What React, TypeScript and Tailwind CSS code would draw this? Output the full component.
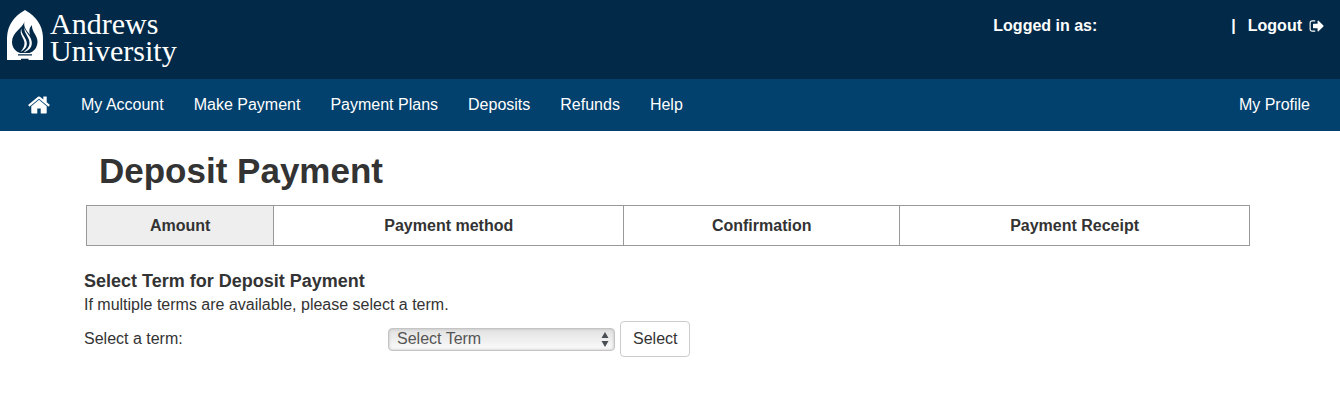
import React, { useState } from "react";

const navLinks = ["My Account", "Make Payment", "Payment Plans", "Deposits", "Refunds", "Help"];

const steps = [
    { label: "Amount", className: "grow-187 bg-[#eeeeee]" },
    { label: "Payment method", className: "grow-350 border-l" },
    { label: "Confirmation", className: "grow-276 border-l" },
    { label: "Payment Receipt", className: "grow-350 border-l" },
];

function LogoMark() {
    return (
        <svg className="h-[50px] w-9" viewBox="0 0 36 50" fill="none" aria-hidden="true">
            <path d="M18 0C10 4.500 0 13 0 29V50H36V29C36 13 26 4.500 18 0Z" fill="#fff" />
            <path
                d="M17.500 11.500C16 18 5 22 5 32C5 37.500 8.500 41.500 13 43H22.500C27 41.500 30.500 37.500 30.500 31.500C30.500 25 24.500 22 25 15C22 18 22 21 23 25C20 21 16 17 17.500 11.500Z"
                fill="#022a48"
            />
            <path
                d="M14.500 18.500C11.500 24 17.500 28 17.500 33C17.500 37 15.500 39 13.500 42C18 39.500 20 37 19.800 33C19.500 27.500 13.500 24 14.500 18.500Z"
                fill="#fff"
            />
            <path
                d="M17.500 17.500C16.500 23 22.500 27 22.500 33C22.500 37.500 19 40 16.500 42.500C22 40.500 25 37.500 24.800 32.500C24.500 26 18.500 23 17.500 17.500Z"
                fill="#fff"
            />
            <path d="M11 44.800H25M14 49.300H21.500" stroke="#022a48" strokeWidth="1.300" />
        </svg>
    );
}

function HomeIcon() {
    return (
        <svg className="size-6" viewBox="0 0 1792 1792" fill="currentColor" aria-hidden="true">
            <path d="M1472 992v480q0 26-19 45t-45 19h-384v-384h-256v384h-384q-26 0-45-19t-19-45v-480q0-1 .5-3t.5-3l575-474 575 474q1 2 1 6zm223-69l-62 74q-8 9-21 11h-3q-13 0-21-7l-692-577-692 577q-12 8-24 7-13-2-21-11l-62-74q-8-10-7-23.500t11-21.500l719-599q32-26 76-26t76 26l244 204v-195q0-14 9-23t23-9h192q14 0 23 9t9 23v408l219 182q10 8 11 21.500t-7 23.500z" />
        </svg>
    );
}

function LogoutIcon() {
    return (
        <svg className="size-4" viewBox="0 0 1792 1792" fill="currentColor" aria-hidden="true">
            <path d="M704 1440q0 4 1 20t.5 26.500-3 23.500-10 19.500-20.500 6.500h-320q-119 0-203.500-84.500t-84.500-203.500v-704q0-119 84.500-203.500t203.500-84.500h320q13 0 22.500 9.500t9.500 22.500q0 4 1 20t.5 26.500-3 23.500-10 19.500-20.500 6.500h-320q-66 0-113 47t-47 113v704q0 66 47 113t113 47h312l11.500 1 11.500 3 8 5.500 7 9 2 13.500zm928-544q0 26-19 45l-544 544q-19 19-45 19t-45-19-19-45v-288h-448q-26 0-45-19t-19-45v-384q0-26 19-45t45-19h448v-288q0-26 19-45t45-19 45 19l544 544q19 19 19 45z" />
        </svg>
    );
}

export default function App() {
    const [term, setTerm] = useState("");

    const handleSubmit = (e: React.FormEvent) => {
        e.preventDefault();
    };

    return (
        <div className="min-h-screen bg-white font-['Liberation_Sans',Arial,sans-serif] text-base text-[#333333]">
            {/* Header */}
            <header className="flex items-start justify-between bg-[#022a48] pr-[15px] pb-[15px] pl-[7px] text-white">
                <a href="#" className="flex gap-[7px] pt-[10px]">
                    <LogoMark />
                    <span className="font-['Liberation_Serif',serif] text-[30px] leading-[27px]">
                        Andrews
                        <br />
                        University
                    </span>
                </a>
                <div className="flex items-center pt-[14px] font-bold">
                    <span className="mr-[134px]">Logged in as:</span>
                    <span className="mr-3">|</span>
                    <a href="#" className="flex items-center gap-[7px]">
                        Logout
                        <LogoutIcon />
                    </a>
                </div>
            </header>

            {/* Menu */}
            <nav className="flex items-center gap-[30px] bg-[#02406e] py-[14px] pr-[30px] pl-[27px] text-white">
                <a href="#" aria-label="Home">
                    <HomeIcon />
                </a>
                {navLinks.map((link) => (
                    <a key={link} href="#">
                        {link}
                    </a>
                ))}
                <a href="#" className="ml-auto">
                    My Profile
                </a>
            </nav>

            <main className="mx-auto max-w-[1172px] pt-5">
                <h1 className="pl-[15px] text-[35px] leading-10 font-bold">Deposit Payment</h1>

                <ol className="mt-[14px] mr-[6px] ml-[2px] flex border border-[#999999] font-bold">
                    {steps.map((step) => (
                        <li
                            key={step.label}
                            className={`basis-0 border-[#999999] py-2 text-center leading-[23px] ${step.className}`}
                        >
                            {step.label}
                        </li>
                    ))}
                </ol>

                <form onSubmit={handleSubmit} className="mt-[23px]">
                    <h2 className="text-lg leading-6 font-bold">Select Term for Deposit Payment</h2>
                    <p>If multiple terms are available, please select a term.</p>

                    <div className="mt-1 flex items-center">
                        <label htmlFor="term" className="w-[304px]">
                            Select a term:
                        </label>
                        <div className="relative mr-[5px] w-[227px]">
                            <select
                                id="term"
                                value={term}
                                onChange={(e) => setTerm(e.target.value)}
                                className="block h-[23px] w-full appearance-none rounded border border-[#c4c4c4] bg-linear-to-b from-[#e2e2e2] to-[#fbfbfb] pl-2 leading-5 text-[#555555] shadow-[inset_0_0_3px_#bbbbbb]"
                            >
                                <option value="">Select Term</option>
                            </select>
                            <svg
                                className="pointer-events-none absolute top-1 right-[6px] h-[15px] w-2"
                                viewBox="0 0 8 15"
                                fill="#4a4f55"
                                aria-hidden="true"
                            >
                                <path d="M4 0L7.500 6H.5ZM4 15L.5 9H7.500Z" />
                            </svg>
                        </div>
                        <button
                            type="submit"
                            className="rounded border border-[#cccccc] bg-white px-3 py-[5px] leading-6"
                        >
                            Select
                        </button>
                    </div>
                </form>
            </main>
        </div>
    );
}
